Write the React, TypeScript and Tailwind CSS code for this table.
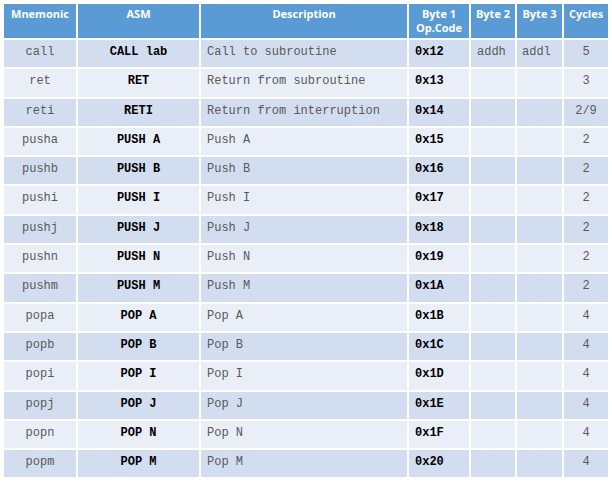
import React from "react";

const rows: [string, string, string, string, string, string, string][] = [
  ["call", "CALL lab", "Call to subroutine", "0x12", "addh", "addl", "5"],
  ["ret", "RET", "Return from subroutine", "0x13", "", "", "3"],
  ["reti", "RETI", "Return from interruption", "0x14", "", "", "2/9"],
  ["pusha", "PUSH A", "Push A", "0x15", "", "", "2"],
  ["pushb", "PUSH B", "Push B", "0x16", "", "", "2"],
  ["pushi", "PUSH I", "Push I", "0x17", "", "", "2"],
  ["pushj", "PUSH J", "Push J", "0x18", "", "", "2"],
  ["pushn", "PUSH N", "Push N", "0x19", "", "", "2"],
  ["pushm", "PUSH M", "Push M", "0x1A", "", "", "2"],
  ["popa", "POP A", "Pop A", "0x1B", "", "", "4"],
  ["popb", "POP B", "Pop B", "0x1C", "", "", "4"],
  ["popi", "POP I", "Pop I", "0x1D", "", "", "4"],
  ["popj", "POP J", "Pop J", "0x1E", "", "", "4"],
  ["popn", "POP N", "Pop N", "0x1F", "", "", "4"],
  ["popm", "POP M", "Pop M", "0x20", "", "", "4"],
];

const mono = "font-['Liberation_Mono','Courier_New',monospace] text-[12px] leading-[14px] whitespace-pre";

export default function App() {
  return (
    <div className="w-[612px] h-[483px] bg-white pt-[4px] pl-[4px]">
      <div className="grid grid-cols-[72px_121px_206px_60px_44px_45px_44px] gap-[2px] w-[604px]">
        {["Mnemonic", "ASM", "Description", "Byte 1\nOp.Code", "Byte 2", "Byte 3", "Cycles"].map((h) => (
          <div
            key={h}
            className="h-[34px] bg-[#5b9bd5] text-white text-center font-['Open_Sans',sans-serif] font-bold text-[11px] leading-[14px] pt-[3px] whitespace-pre-line"
          >
            {h}
          </div>
        ))}
        {rows.map((r, i) => {
          const bg = i % 2 === 0 ? "bg-[#d2deef]" : "bg-[#eaeff7]";
          return (
            <React.Fragment key={r[0]}>
              <div className={`${bg} h-[27.3px] pt-[5px] text-center text-[#595959] ${mono}`}>{r[0]}</div>
              <div className={`${bg} h-[27.3px] pt-[5px] text-center text-black font-bold ${mono}`}>{r[1]}</div>
              <div className={`${bg} h-[27.3px] pt-[5px] pl-[6px] text-[#595959] ${mono}`}>{r[2]}</div>
              <div className={`${bg} h-[27.3px] pt-[5px] pl-[6px] text-black font-bold ${mono}`}>{r[3]}</div>
              <div className={`${bg} h-[27.3px] pt-[5px] pl-[6px] text-[#595959] ${mono}`}>{r[4]}</div>
              <div className={`${bg} h-[27.3px] pt-[5px] pl-[5px] text-[#595959] ${mono}`}>{r[5]}</div>
              <div className={`${bg} h-[27.3px] pt-[5px] text-center text-[#595959] ${mono}`}>{r[6]}</div>
            </React.Fragment>
          );
        })}
      </div>
    </div>
  );
}
